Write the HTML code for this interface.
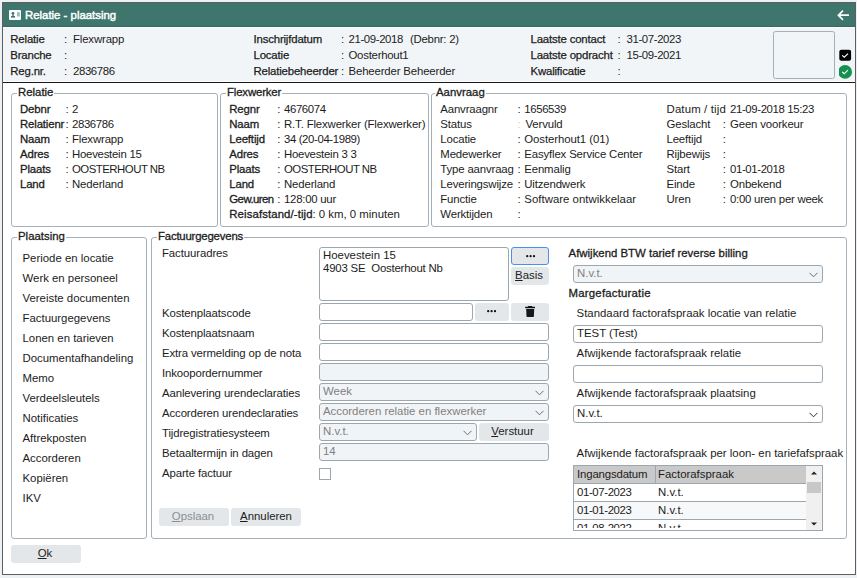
<!DOCTYPE html>
<html><head><meta charset="utf-8"><style>
html,body{margin:0;padding:0}
body{width:857px;height:578px;background:#eef1f4;position:relative;overflow:hidden;font-family:"Liberation Sans",sans-serif}
#win{position:absolute;left:2px;top:2px;width:852px;height:571px;border:1px solid #5e5e5e;background:#fff}
#title{position:absolute;left:3px;top:3px;width:852px;height:23px;background:#3e766e;border-bottom:1px solid #336a62}
#hdr{position:absolute;left:3px;top:28px;width:852px;height:53px;background:#f2f5f8}
#hline{position:absolute;left:3px;top:82px;width:852px;height:1px;background:#1a1a1a}
.t{position:absolute;font-size:11.4px;line-height:13px;white-space:pre;color:#1c1c1c}
.hb{-webkit-text-stroke:0.25px #1c1c1c;letter-spacing:-0.17px}
.mb{-webkit-text-stroke:0.3px #1c1c1c;letter-spacing:0.12px}
.lg{background:#fff;padding:0 1px}
.md{-webkit-text-stroke:0.3px #1c1c1c}
.st{color:#f0c890}
.grp{position:absolute;box-sizing:border-box;border:1px solid #a6b0b8;border-radius:3px}
.inp{position:absolute;box-sizing:border-box;border:1px solid #9ba6af;border-radius:3px;background:#fff}
.dis{background:#f1f4f7}
.it{position:absolute;left:3px;top:1px;font-size:11.4px;line-height:13px;white-space:pre;color:#1c1c1c}
.gr{color:#808080}
.chev{position:absolute;right:4px;top:6px}
.ta{position:absolute;left:3px;top:1px;font-size:11.4px;line-height:13px;color:#1c1c1c}
.btn{position:absolute;box-sizing:border-box;background:#e3e7ea;border-radius:3px}
.focus{border:1px solid #4a8ef0}
.bt{position:absolute;left:0;right:0;top:2px;text-align:center;font-size:11.4px;line-height:13px;color:#1c1c1c}
.bt u{text-decoration:underline;text-underline-offset:1px}
.dim{color:#8a8f94}
.cb{position:absolute;box-sizing:border-box;border:1px solid #9ba6af;background:#fff}
.gwrap{position:absolute;box-sizing:border-box;border:1px solid #9ba6af;overflow:hidden}
.grid{position:absolute;left:0;top:0;width:248px;height:64px}
.gh{position:absolute;background:#c9c9c9;border-bottom:1px solid #9ba6af;box-sizing:border-box}
.gcol{position:absolute;width:1px;background:#9ba6af}
.grow{position:absolute;left:0;width:232px;height:18px;border-bottom:1px solid #9ba6af;box-sizing:border-box}
.gt{position:absolute;font-size:11.4px;line-height:13px;white-space:pre;color:#1c1c1c}
.sb{position:absolute;left:232px;top:0;width:16px;height:64px;background:#f0f0f0}
.thumb{position:absolute;left:1px;top:16px;width:14px;height:11px;background:#c8c8c8}
</style></head><body>
<div id="win"></div>
<div id="title"></div>
<div id="hdr"></div>
<div id="hline"></div>
<svg style="position:absolute;left:9px;top:10px" width="12" height="10" viewBox="0 0 12 10"><rect x="0" y="0" width="12" height="10" rx="1" fill="#fff"/><circle cx="4" cy="3.2" r="1.3" fill="#3e756d"/><rect x="3.3" y="4" width="1.4" height="2" fill="#3e756d"/><rect x="2" y="6" width="4" height="1.6" fill="#3e756d"/><rect x="8" y="2.2" width="2.8" height="4.3" fill="#9cbdb7"/></svg>
<div class="t" style="left:25px;top:9px;color:#fff;-webkit-text-stroke:0.45px #fff;letter-spacing:0px">Relatie - plaatsing</div>
<svg style="position:absolute;left:836px;top:9px" width="14" height="12" viewBox="0 0 14 12"><path d="M13 6.2 H2.5 M7 1.6 L2.4 6.2 L7 10.8" fill="none" stroke="#fff" stroke-width="1.7"/></svg>
<div style="position:absolute;left:773px;top:31px;width:62px;height:48px;box-sizing:border-box;border:1px solid #a3b0b9;border-radius:2.5px"></div>
<svg style="position:absolute;left:839px;top:49px" width="13" height="31" viewBox="0 0 13 31"><rect x="0.3" y="0.8" width="11.8" height="11" rx="2" fill="#000"/><path d="M3.2 6.4 L5.3 8.2 L9 4.6" fill="none" stroke="#fff" stroke-width="1.1"/><circle cx="6.1" cy="22.9" r="6.9" fill="#15914d"/><path d="M3.2 23 L5.2 24.8 L8.9 21.2" fill="none" stroke="#fff" stroke-width="1.15"/></svg>
<div class="t hb" style="left:10.3px;top:33px;">Relatie</div>
<div class="t hc" style="left:64px;top:33px;">:</div>
<div class="t " style="left:73px;top:33px;letter-spacing:-0.15px;">Flexwrapp</div>
<div class="t hb" style="left:10.3px;top:49px;">Branche</div>
<div class="t hc" style="left:64px;top:49px;">:</div>
<div class="t " style="left:73px;top:49px;letter-spacing:-0.15px;"></div>
<div class="t hb" style="left:10.3px;top:65px;">Reg.nr.</div>
<div class="t hc" style="left:64px;top:65px;">:</div>
<div class="t " style="left:73px;top:65px;letter-spacing:-0.38px;">2836786</div>
<div class="t hb" style="left:253.5px;top:33px;">Inschrijfdatum</div>
<div class="t hc" style="left:341px;top:33px;">:</div>
<div class="t " style="left:348.5px;top:33px;letter-spacing:-0.38px;">21-09-2018</div>
<div class="t hb" style="left:253.5px;top:49px;">Locatie</div>
<div class="t hc" style="left:341px;top:49px;">:</div>
<div class="t " style="left:348.5px;top:49px;letter-spacing:-0.25px;">Oosterhout1</div>
<div class="t hb" style="left:253.5px;top:65px;">Relatiebeheerder</div>
<div class="t hc" style="left:341px;top:65px;">:</div>
<div class="t " style="left:348.5px;top:65px;letter-spacing:-0.15px;">Beheerder Beheerder</div>
<div class="t " style="left:410px;top:33px;letter-spacing:-0.25px;">(Debnr: 2)</div>
<div class="t hb" style="left:530.5px;top:33px;">Laatste contact</div>
<div class="t hc" style="left:617.5px;top:33px;">:</div>
<div class="t " style="left:626.5px;top:33px;letter-spacing:-0.38px;">31-07-2023</div>
<div class="t hb" style="left:530.5px;top:49px;">Laatste opdracht</div>
<div class="t hc" style="left:617.5px;top:49px;">:</div>
<div class="t " style="left:626.5px;top:49px;letter-spacing:-0.38px;">15-09-2021</div>
<div class="t hb" style="left:530.5px;top:65px;">Kwalificatie</div>
<div class="t hc" style="left:617.5px;top:65px;">:</div>
<div class="t " style="left:626.5px;top:65px;letter-spacing:-0.15px;"></div>
<div class="grp" style="left:11px;top:93px;width:207px;height:134px;"></div>
<div class="t lg md" style="left:17px;top:86px;letter-spacing:0px">Relatie</div>
<div class="grp" style="left:220px;top:93px;width:209px;height:134px;"></div>
<div class="t lg md" style="left:226px;top:86px;letter-spacing:-0.15px">Flexwerker</div>
<div class="grp" style="left:431px;top:93px;width:416px;height:134px;"></div>
<div class="t lg md" style="left:435px;top:86px;letter-spacing:0px">Aanvraag</div>
<div class="grp" style="left:11px;top:237px;width:136px;height:302px;"></div>
<div class="t lg md" style="left:17px;top:230px;letter-spacing:0px">Plaatsing</div>
<div class="grp" style="left:151px;top:237px;width:696px;height:302px;"></div>
<div class="t lg md" style="left:157px;top:230px;letter-spacing:-0.2px">Factuurgegevens</div>
<div class="t md" style="left:20px;top:103px;letter-spacing:-0.15px;">Debnr</div>
<div class="t " style="left:65.5px;top:103px;">:</div>
<div class="t " style="left:72px;top:103px;letter-spacing:-0.38px;">2</div>
<div class="t md" style="left:20px;top:118px;letter-spacing:-0.15px;">Relatienr</div>
<div class="t " style="left:65.5px;top:118px;">:</div>
<div class="t " style="left:72px;top:118px;letter-spacing:-0.38px;">2836786</div>
<div class="t md" style="left:20px;top:133px;letter-spacing:-0.15px;">Naam</div>
<div class="t " style="left:65.5px;top:133px;">:</div>
<div class="t " style="left:72px;top:133px;letter-spacing:-0.15px;">Flexwrapp</div>
<div class="t md" style="left:20px;top:148px;letter-spacing:-0.15px;">Adres</div>
<div class="t " style="left:65.5px;top:148px;">:</div>
<div class="t " style="left:72px;top:148px;letter-spacing:-0.25px;">Hoevestein 15</div>
<div class="t md" style="left:20px;top:163px;letter-spacing:-0.15px;">Plaats</div>
<div class="t " style="left:65.5px;top:163px;">:</div>
<div class="t " style="left:72px;top:163px;letter-spacing:-0.5px;">OOSTERHOUT NB</div>
<div class="t md" style="left:20px;top:178px;letter-spacing:-0.15px;">Land</div>
<div class="t " style="left:65.5px;top:178px;">:</div>
<div class="t " style="left:72px;top:178px;letter-spacing:-0.15px;">Nederland</div>
<div class="t md" style="left:229.3px;top:103px;letter-spacing:-0.15px;">Regnr</div>
<div class="t " style="left:277.2px;top:103px;">:</div>
<div class="t " style="left:284px;top:103px;letter-spacing:-0.38px;">4676074</div>
<div class="t md" style="left:229.3px;top:118px;letter-spacing:-0.15px;">Naam</div>
<div class="t " style="left:277.2px;top:118px;">:</div>
<div class="t " style="left:284px;top:118px;letter-spacing:-0.15px;">R.T. Flexwerker (Flexwerker)</div>
<div class="t md" style="left:229.3px;top:133px;letter-spacing:-0.15px;">Leeftijd</div>
<div class="t " style="left:277.2px;top:133px;">:</div>
<div class="t " style="left:284px;top:133px;letter-spacing:-0.38px;">34 (20-04-1989)</div>
<div class="t md" style="left:229.3px;top:148px;letter-spacing:-0.15px;">Adres</div>
<div class="t " style="left:277.2px;top:148px;">:</div>
<div class="t " style="left:284px;top:148px;letter-spacing:-0.25px;">Hoevestein 3 3</div>
<div class="t md" style="left:229.3px;top:163px;letter-spacing:-0.15px;">Plaats</div>
<div class="t " style="left:277.2px;top:163px;">:</div>
<div class="t " style="left:284px;top:163px;letter-spacing:-0.5px;">OOSTERHOUT NB</div>
<div class="t md" style="left:229.3px;top:178px;letter-spacing:-0.15px;">Land</div>
<div class="t " style="left:277.2px;top:178px;">:</div>
<div class="t " style="left:284px;top:178px;letter-spacing:-0.15px;">Nederland</div>
<div class="t md" style="left:229.3px;top:193px;letter-spacing:-0.55px;">Gew.uren</div>
<div class="t " style="left:277.2px;top:193px;">:</div>
<div class="t " style="left:284px;top:193px;letter-spacing:-0.25px;">128:00 uur</div>
<div class="t md" style="left:229.3px;top:208px;letter-spacing:0.1px;">Reisafstand/-tijd</div>
<div class="t " style="left:312.5px;top:208px;">: 0 km, 0 minuten</div>
<div class="t " style="left:440.3px;top:103px;letter-spacing:-0.15px;">Aanvraagnr</div>
<div class="t " style="left:517.5px;top:103px;">:</div>
<div class="t " style="left:524.3px;top:103px;letter-spacing:-0.38px;">1656539</div>
<div class="t " style="left:440.3px;top:118px;letter-spacing:-0.15px;">Status</div>
<div class="t st" style="left:517.5px;top:118px;">:</div>
<div class="t " style="left:525.5px;top:118px;letter-spacing:-0.15px;">Vervuld</div>
<div class="t " style="left:440.3px;top:133px;letter-spacing:-0.15px;">Locatie</div>
<div class="t " style="left:517.5px;top:133px;">:</div>
<div class="t " style="left:524.3px;top:133px;letter-spacing:-0.08px;">Oosterhout1 (01)</div>
<div class="t " style="left:440.3px;top:148px;letter-spacing:-0.15px;">Medewerker</div>
<div class="t " style="left:517.5px;top:148px;">:</div>
<div class="t " style="left:524.3px;top:148px;letter-spacing:-0.15px;">Easyflex Service Center</div>
<div class="t " style="left:440.3px;top:163px;letter-spacing:-0.15px;">Type aanvraag</div>
<div class="t " style="left:517.5px;top:163px;">:</div>
<div class="t " style="left:524.3px;top:163px;letter-spacing:-0.15px;">Eenmalig</div>
<div class="t " style="left:440.3px;top:178px;letter-spacing:-0.15px;">Leveringswijze</div>
<div class="t " style="left:517.5px;top:178px;">:</div>
<div class="t " style="left:524.3px;top:178px;letter-spacing:-0.15px;">Uitzendwerk</div>
<div class="t " style="left:440.3px;top:193px;letter-spacing:-0.15px;">Functie</div>
<div class="t " style="left:517.5px;top:193px;">:</div>
<div class="t " style="left:524.3px;top:193px;letter-spacing:0.02px;">Software ontwikkelaar</div>
<div class="t " style="left:440.3px;top:208px;letter-spacing:-0.15px;">Werktijden</div>
<div class="t " style="left:517.5px;top:208px;">:</div>
<div class="t " style="left:524.3px;top:208px;letter-spacing:-0.15px;"></div>
<div class="t " style="left:666.5px;top:103px;letter-spacing:0.15px;">Datum / tijd</div>
<div class="t " style="left:730px;top:103px;letter-spacing:-0.38px;">21-09-2018 15:23</div>
<div class="t " style="left:666.5px;top:118px;letter-spacing:-0.15px;">Geslacht</div>
<div class="t " style="left:722.8px;top:118px;">:</div>
<div class="t " style="left:730px;top:118px;letter-spacing:-0.15px;">Geen voorkeur</div>
<div class="t " style="left:666.5px;top:133px;letter-spacing:-0.15px;">Leeftijd</div>
<div class="t " style="left:722.8px;top:133px;">:</div>
<div class="t " style="left:730px;top:133px;letter-spacing:-0.15px;"></div>
<div class="t " style="left:666.5px;top:148px;letter-spacing:-0.15px;">Rijbewijs</div>
<div class="t " style="left:722.8px;top:148px;">:</div>
<div class="t " style="left:730px;top:148px;letter-spacing:-0.15px;"></div>
<div class="t " style="left:666.5px;top:163px;letter-spacing:-0.15px;">Start</div>
<div class="t " style="left:722.8px;top:163px;">:</div>
<div class="t " style="left:730px;top:163px;letter-spacing:-0.38px;">01-01-2018</div>
<div class="t " style="left:666.5px;top:178px;letter-spacing:-0.15px;">Einde</div>
<div class="t " style="left:722.8px;top:178px;">:</div>
<div class="t " style="left:730px;top:178px;letter-spacing:-0.15px;">Onbekend</div>
<div class="t " style="left:666.5px;top:193px;letter-spacing:-0.15px;">Uren</div>
<div class="t " style="left:722.8px;top:193px;">:</div>
<div class="t " style="left:730px;top:193px;letter-spacing:-0.25px;">0:00 uren per week</div>
<div class="t " style="left:22.5px;top:252px;">Periode en locatie</div>
<div class="t " style="left:22.5px;top:272px;">Werk en personeel</div>
<div class="t " style="left:22.5px;top:292px;">Vereiste documenten</div>
<div class="t " style="left:22.5px;top:312px;">Factuurgegevens</div>
<div class="t " style="left:22.5px;top:332px;">Lonen en tarieven</div>
<div class="t " style="left:22.5px;top:352px;">Documentafhandeling</div>
<div class="t " style="left:22.5px;top:372px;">Memo</div>
<div class="t " style="left:22.5px;top:392px;">Verdeelsleutels</div>
<div class="t " style="left:22.5px;top:412px;">Notificaties</div>
<div class="t " style="left:22.5px;top:432px;">Aftrekposten</div>
<div class="t " style="left:22.5px;top:452px;">Accorderen</div>
<div class="t " style="left:22.5px;top:472px;">Kopi&euml;ren</div>
<div class="t " style="left:22.5px;top:492px;">IKV</div>
<div class="t " style="left:162px;top:247px;letter-spacing:-0.1px">Factuuradres</div>
<div class="t " style="left:162px;top:307px;letter-spacing:-0.12px">Kostenplaatscode</div>
<div class="t " style="left:162px;top:327px;letter-spacing:-0.12px">Kostenplaatsnaam</div>
<div class="t " style="left:162px;top:347px;letter-spacing:-0.12px">Extra vermelding op de nota</div>
<div class="t " style="left:162px;top:367px;letter-spacing:-0.12px">Inkoopordernummer</div>
<div class="t " style="left:162px;top:387px;letter-spacing:-0.12px">Aanlevering urendeclaraties</div>
<div class="t " style="left:162px;top:407px;letter-spacing:-0.12px">Accorderen urendeclaraties</div>
<div class="t " style="left:162px;top:427px;letter-spacing:-0.12px">Tijdregistratiesysteem</div>
<div class="t " style="left:162px;top:447px;letter-spacing:-0.12px">Betaaltermijn in dagen</div>
<div class="t " style="left:162px;top:467px;letter-spacing:-0.12px">Aparte factuur</div>
<div class="inp" style="left:319px;top:247px;width:190px;height:54px;"><div class="ta">Hoevestein 15<br><span style="letter-spacing:-0.2px">4903 SE&nbsp; Oosterhout Nb</span></div></div>
<div class="btn focus" style="left:511px;top:247px;width:38px;height:18px;"><svg width="10" height="3" viewBox="0 0 10 3" style="position:absolute;left:14px;top:7px"><circle cx="1.2" cy="1.2" r="1.15" fill="#111"/><circle cx="4.6" cy="1.2" r="1.15" fill="#111"/><circle cx="8" cy="1.2" r="1.15" fill="#111"/></svg></div>
<div class="btn" style="left:511px;top:267px;width:38px;height:18px;"><span class="bt" style="left:-2px"><u>B</u>asis</span></div>
<div class="inp" style="left:319px;top:303px;width:154px;height:18px;"></div>
<div class="btn" style="left:475px;top:303px;width:34px;height:18px;"><svg width="10" height="3" viewBox="0 0 10 3" style="position:absolute;left:12px;top:7px"><circle cx="1.2" cy="1.2" r="1.15" fill="#111"/><circle cx="4.6" cy="1.2" r="1.15" fill="#111"/><circle cx="8" cy="1.2" r="1.15" fill="#111"/></svg></div>
<div class="btn" style="left:511px;top:303px;width:38px;height:18px;"><svg width="11" height="12" viewBox="0 0 11 12" style="position:absolute;left:14px;top:3px"><path d="M3.3 0.1h3.6l0.5 0.6h2.6v1.5H0.2V0.7h2.6z" fill="#111"/><path d="M1.2 2.9H9.2L8.9 10.3Q8.9 10.9 8.3 10.9H2.1Q1.5 10.9 1.5 10.3z" fill="#15181a"/></svg></div>
<div class="inp" style="left:319px;top:323px;width:230px;height:18px;"></div>
<div class="inp" style="left:319px;top:343px;width:230px;height:18px;"></div>
<div class="inp dis" style="left:319px;top:363px;width:230px;height:18px;"></div>
<div class="inp dis" style="left:319px;top:383px;width:230px;height:18px;"><span class="it gr">Week</span><svg class="chev" width="9" height="6" viewBox="0 0 9 6"><path d="M0.5 0.8 L4.5 4.8 L8.5 0.8" fill="none" stroke="#6b6b6b" stroke-width="1"/></svg></div>
<div class="inp dis" style="left:319px;top:403px;width:230px;height:18px;"><span class="it gr">Accorderen relatie en flexwerker</span><svg class="chev" width="9" height="6" viewBox="0 0 9 6"><path d="M0.5 0.8 L4.5 4.8 L8.5 0.8" fill="none" stroke="#6b6b6b" stroke-width="1"/></svg></div>
<div class="inp dis" style="left:319px;top:423px;width:158px;height:18px;"><span class="it gr">N.v.t.</span><svg class="chev" width="9" height="6" viewBox="0 0 9 6"><path d="M0.5 0.8 L4.5 4.8 L8.5 0.8" fill="none" stroke="#6b6b6b" stroke-width="1"/></svg></div>
<div class="btn" style="left:479px;top:423px;width:70px;height:18px;"><span class="bt" style="left:-3px"><u>V</u>erstuur</span></div>
<div class="inp dis" style="left:319px;top:443px;width:230px;height:18px;"><span class="it gr">14</span></div>
<div class="cb" style="left:319px;top:468px;width:12px;height:12px;"></div>
<div class="btn" style="left:159px;top:508px;width:70px;height:18px;"><span class="bt dim" style="left:-2px"><u>O</u>pslaan</span></div>
<div class="btn" style="left:231px;top:508px;width:70px;height:18px;"><span class="bt"><u>A</u>nnuleren</span></div>
<div class="t mb" style="left:568.6px;top:247px;letter-spacing:0">Afwijkend BTW tarief reverse billing</div>
<div class="inp dis" style="left:573px;top:265px;width:250px;height:18px;"><span class="it gr">N.v.t.</span><svg class="chev" width="9" height="6" viewBox="0 0 9 6"><path d="M0.5 0.8 L4.5 4.8 L8.5 0.8" fill="none" stroke="#6b6b6b" stroke-width="1"/></svg></div>
<div class="t mb" style="left:568.6px;top:287px;letter-spacing:0.2px">Margefacturatie</div>
<div class="t " style="left:576.6px;top:307px;">Standaard factorafspraak locatie van relatie</div>
<div class="inp" style="left:573px;top:325px;width:250px;height:18px;"><span class="it ">TEST (Test)</span></div>
<div class="t " style="left:576.6px;top:347px;">Afwijkende factorafspraak relatie</div>
<div class="inp" style="left:573px;top:365px;width:250px;height:18px;"></div>
<div class="t " style="left:576.6px;top:387px;">Afwijkende factorafspraak plaatsing</div>
<div class="inp" style="left:573px;top:405px;width:250px;height:18px;"><span class="it ">N.v.t.</span><svg class="chev" width="9" height="6" viewBox="0 0 9 6"><path d="M0.5 0.8 L4.5 4.8 L8.5 0.8" fill="none" stroke="#2a2a2a" stroke-width="1"/></svg></div>
<div class="t " style="left:576.6px;top:447px;">Afwijkende factorafspraak per loon- en tariefafspraak</div>
<div class="gwrap" style="left:573px;top:465px;width:250px;height:66px;"><div class="grid">
<div class="gh" style="left:0;top:0;width:232px;height:18px"></div>
<div class="gcol" style="left:81px;top:0;height:18px"></div>
<div class="gt" style="left:3px;top:2px;letter-spacing:-0.15px">Ingangsdatum</div>
<div class="gt" style="left:84px;top:2px">Factorafspraak</div>
<div class="grow" style="top:18px;background:#fff"></div>
<div class="grow" style="top:36px;background:#f6f8f9"></div>
<div class="grow" style="top:54px;background:#fff"></div>
<div class="gt" style="left:3px;top:20px;letter-spacing:-0.38px">01-07-2023</div>
<div class="gt" style="left:84px;top:20px">N.v.t.</div>
<div class="gt" style="left:3px;top:38px;letter-spacing:-0.38px">01-01-2023</div>
<div class="gt" style="left:84px;top:38px">N.v.t.</div>
<div style="position:absolute;left:0;top:54px;width:232px;height:8px;overflow:hidden"><div class="gt" style="left:3px;top:2px;letter-spacing:-0.38px">01-08-2022</div>
<div class="gt" style="left:84px;top:2px">N.v.t.</div></div>
<div class="sb"><div class="thumb"></div>
<svg style="position:absolute;left:5px;top:4.5px" width="6" height="4"><path d="M0 3.5 L3 0.5 L6 3.5z" fill="#222"/></svg>
<svg style="position:absolute;left:5px;top:56px" width="6" height="4"><path d="M0 0.5 L3 3.5 L6 0.5z" fill="#222"/></svg>
</div>
</div></div>
<div class="btn" style="left:11px;top:545px;width:70px;height:18px;"><span class="bt" style="left:-2px"><u>O</u>k</span></div>
</body></html>
